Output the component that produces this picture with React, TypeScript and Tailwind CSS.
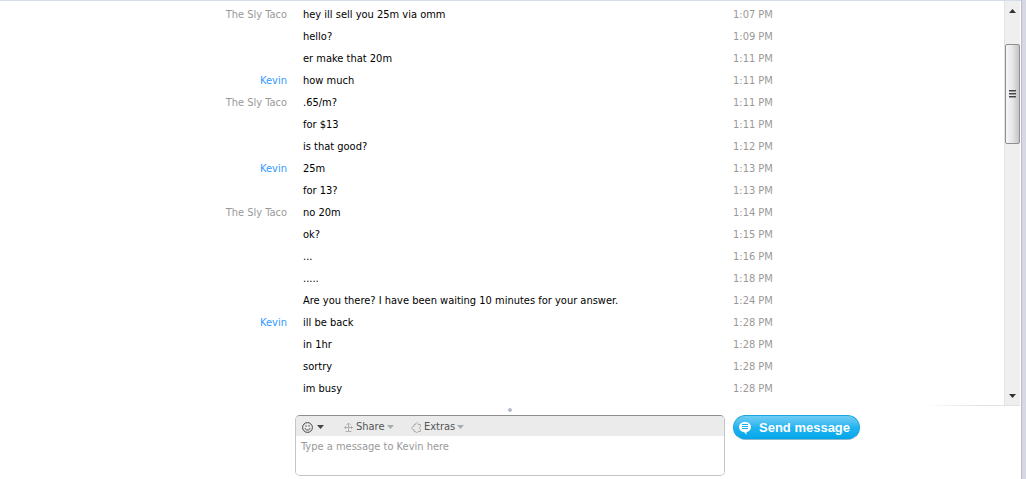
import React from "react";

type Message = { from?: "The Sly Taco" | "Kevin"; text: string; time: string };

const messages: Message[] = [
  { from: "The Sly Taco", text: "hey ill sell you 25m via omm", time: "1:07 PM" },
  { text: "hello?", time: "1:09 PM" },
  { text: "er make that 20m", time: "1:11 PM" },
  { from: "Kevin", text: "how much", time: "1:11 PM" },
  { from: "The Sly Taco", text: ".65/m?", time: "1:11 PM" },
  { text: "for $13", time: "1:11 PM" },
  { text: "is that good?", time: "1:12 PM" },
  { from: "Kevin", text: "25m", time: "1:13 PM" },
  { text: "for 13?", time: "1:13 PM" },
  { from: "The Sly Taco", text: "no 20m", time: "1:14 PM" },
  { text: "ok?", time: "1:15 PM" },
  { text: "...", time: "1:16 PM" },
  { text: ".....", time: "1:18 PM" },
  { text: "Are you there? I have been waiting 10 minutes for your answer.", time: "1:24 PM" },
  { from: "Kevin", text: "ill be back", time: "1:28 PM" },
  { text: "in 1hr", time: "1:28 PM" },
  { text: "sortry", time: "1:28 PM" },
  { text: "im busy", time: "1:28 PM" },
];

function Caret({ className }: { className: string }) {
  return (
    <svg viewBox="0 0 7 4" className={`h-1 w-[7px] ${className}`} aria-hidden="true">
      <path d="M0 0h7L3.5 4z" fill="currentColor" />
    </svg>
  );
}

function MessageRow({ message }: { message: Message }) {
  return (
    <li className="grid grid-cols-[1fr_430px_1fr] leading-[22px]">
      <span className={`pr-2 text-right ${message.from === "Kevin" ? "text-[#3399ff]" : "text-[#999999]"}`}>
        {message.from}
      </span>
      <span className="px-2 text-black">{message.text}</span>
      <time className="pl-2 text-[#999999]">{message.time}</time>
    </li>
  );
}

function Scrollbar() {
  return (
    <div className="flex w-4 flex-col border-l border-[#e3e3e3] bg-[#efefef]">
      <button aria-label="Scroll up" className="flex h-[43px] items-start justify-center pt-2 text-[#333333]">
        <svg viewBox="0 0 7 4" className="h-1 w-[7px]">
          <path d="M3.5 0L7 4H0z" fill="currentColor" />
        </svg>
      </button>
      <div className="flex h-[100px] flex-col items-center justify-center gap-px rounded-xs border border-[#8f8f8f] bg-linear-to-r from-[#f6f6f6] via-[#e6e6e8] to-[#c4c4c8]">
        <span className="h-0.5 w-[7px] border-b border-[#999999] bg-[#444444]" />
        <span className="h-0.5 w-[7px] border-b border-[#999999] bg-[#444444]" />
        <span className="h-0.5 w-[7px] border-b border-[#999999] bg-[#444444]" />
      </div>
      <button aria-label="Scroll down" className="flex flex-1 items-end justify-center pb-[7px] text-[#333333]">
        <Caret className="" />
      </button>
    </div>
  );
}

function Composer() {
  return (
    <form className="grid grid-cols-[1fr_430px_1fr]" onSubmit={(e) => e.preventDefault()}>
      <div className="col-start-2 overflow-hidden rounded-[5px] border border-[#c4c4c4] border-t-[#8e8e8e] bg-white">
        <div className="flex h-5 items-center bg-[#ebebeb] pt-0.5 pl-1.5 text-[#555555]">
          <button type="button" aria-label="Emoticons" className="flex w-[41px] items-center gap-1">
            <svg viewBox="0 0 11 11" className="size-[11px]" fill="none" stroke="#444">
              <circle cx="5.5" cy="5.5" r="4.9" />
              <path d="M3 6.3c.6 2.4 4.4 2.4 5 0" />
              <path d="M4 3.2v1.5M7 3.2v1.5" />
            </svg>
            <Caret className="text-[#3d464a]" />
          </button>
          <button type="button" className="flex w-[68px] items-center gap-0.5">
            <svg viewBox="0 0 11 11" className="size-[11px]" fill="none" stroke="#b0b0b0">
              <path d="M5.5 1v9M1 5.5h9M3.500 3l2-2 2 2M2.500 9.500h6M2.500 4v3M8.500 4v3" />
            </svg>
            <span>Share</span>
            <Caret className="text-[#a5adad]" />
          </button>
          <button type="button" className="flex items-center gap-0.5">
            <svg viewBox="0 0 11 11" className="size-[11px]" fill="none" stroke="#b0b0b0">
              <path d="M3 2.500H4.500C4 .2 7.500 .2 7 2.500H9.500V4.500C8 4.500 8 7 9.500 7V9.500H7C7.500 11 4 11 4.500 9.500H3V7.500C0 8 0 4 3 4.500z" />
            </svg>
            <span>Extras</span>
            <Caret className="text-[#a5adad]" />
          </button>
        </div>
        <textarea
          aria-label="Message"
          placeholder="Type a message to Kevin here"
          className="block h-[39px] w-full resize-none bg-white px-[5px] py-[3px] leading-4 outline-none placeholder:text-[#999999]"
        />
      </div>
      <div className="pl-2">
        <button
          type="submit"
          className="flex h-[25px] w-[127px] items-center gap-[7px] rounded-full border border-[#1ba5dc] border-b-[#8fb8c9] bg-linear-to-b from-[#6dcdf4] via-[#1fb4f0] to-[#00a6ea] pl-1 font-['Liberation_Sans',sans-serif] text-[13px] font-bold text-white"
        >
          <svg viewBox="0 0 14 14" className="size-3.5">
            <path d="M7 1C3.500 1 1 3.200 1 6S3.500 11 6 11l2.500 2.800V11C11.300 10.600 13 8.600 13 6 13 3.200 10.500 1 7 1z" fill="#fff" />
            <path d="M4 3.500h6M4 5.500h6M4 7.500h6" stroke="#1aaeea" />
          </svg>
          <span>Send message</span>
        </button>
      </div>
    </form>
  );
}

export default function App() {
  return (
    <div className="flex min-h-screen bg-white font-['DejaVu_Sans_Condensed','DejaVu_Sans',sans-serif] text-[11px]">
      <main className="flex flex-1 flex-col border-t border-[#d6dde6] pr-px">
        <div className="flex">
          <ul className="flex-1 pt-[3px] pb-[5px] pl-4">
            {messages.map((m, i) => (
              <MessageRow key={i} message={m} />
            ))}
          </ul>
          <Scrollbar />
        </div>
        <div className="ml-auto h-px w-24 bg-linear-to-r from-white to-[#e1e1e8] to-60%" />
        <div className="flex h-[9px] items-start justify-center pt-0.5">
          <span className="size-1 rounded-full border border-[#b4bcc8] bg-[#b4bcc8]" />
        </div>
        <Composer />
      </main>
      <div className="w-[5px] border-l border-[#b9bbc9] bg-[#d6d9e3]" />
    </div>
  );
}
